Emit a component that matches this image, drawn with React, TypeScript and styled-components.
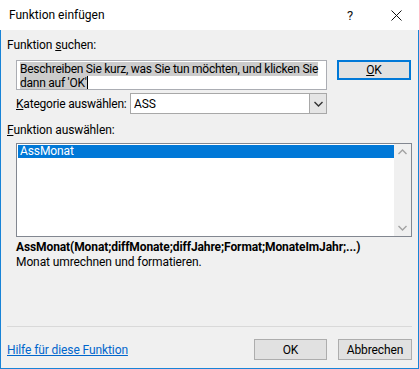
import React from "react";
import styled, { createGlobalStyle } from "styled-components";

const Global = createGlobalStyle`
  html, body { margin: 0; padding: 0; background: #ffffff; }
  body { font-family: Roboto, "Noto Sans", "DejaVu Sans", sans-serif; font-size: 12px; letter-spacing: -0.1px; color: #000; }
  * { box-sizing: border-box; }
`;

const Window = styled.div`
  width: 419px;
  height: 369px;
  display: flex;
  flex-direction: column;
  background: #f0f0f0;
`;

const TitleBar = styled.div`
  height: 30px;
  background: #ffffff;
  display: flex;
  align-items: center;
  padding-left: 9px;
`;

const Title = styled.div`
  flex: 1;
  font-size: 12px;
  letter-spacing: 0;
`;

const CaptionButton = styled.div`
  width: 46px;
  height: 30px;
  display: flex;
  align-items: center;
  justify-content: center;
  font-size: 13px;
  color: #111;
`;

const Body = styled.div`
  flex: 1;
  display: flex;
  flex-direction: column;
  border: 1px solid #1883d7;
  border-top: none;
  padding: 7px 6px 8px 6px;
`;

const Label = styled.div<{ $mt?: number }>`
  line-height: 16px;
  height: 16px;
  margin-top: ${(p) => p.$mt ?? 0}px;
  white-space: nowrap;
`;

const SearchRow = styled.div`
  display: flex;
  align-items: flex-start;
  gap: 10px;
  margin-top: 7px;
  padding-left: 9px;
`;

const SearchBox = styled.div`
  width: 311px;
  height: 30px;
  background: #ffffff;
  border: 1px solid #abadb3;
  padding: 1px 2px 0 3px;
  line-height: 14px;
  letter-spacing: -0.25px;
  white-space: nowrap;
  overflow: hidden;
`;

const Selected = styled.span`
  background: #cccccc;
`;

const Caret = styled.span`
  display: inline-block;
  width: 1px;
  height: 13px;
  background: #000;
  vertical-align: -2px;
`;

const Button = styled.div<{ $primary?: boolean; $w: number }>`
  width: ${(p) => p.$w}px;
  height: ${(p) => (p.$primary ? 20 : 21)}px;
  background: #e1e1e1;
  border: ${(p) => (p.$primary ? "2px solid #0078d7" : "1px solid #adadad")};
  display: flex;
  align-items: center;
  justify-content: center;
`;

const CategoryRow = styled.div`
  display: flex;
  align-items: center;
  margin-top: 3px;
  padding-left: 9px;
  height: 21px;
`;

const CategoryLabel = styled.div`
  width: 114px;
  white-space: nowrap;
  letter-spacing: -0.2px;
`;

const Select = styled.div`
  width: 197px;
  height: 21px;
  border: 1px solid #a8a8a8;
  background: #fff;
  display: flex;
  align-items: stretch;
`;

const SelectValue = styled.div`
  flex: 1;
  padding-left: 3px;
  display: flex;
  align-items: center;
`;

const DropButton = styled.div`
  width: 17px;
  background: #e5e5e5;
  border-left: 1px solid #a8a8a8;
  display: flex;
  align-items: center;
  justify-content: center;
`;

const ListBox = styled.div`
  margin-top: 5px;
  margin-left: 9px;
  width: 396px;
  height: 94px;
  border: 1px solid #828790;
  background: #fff;
  display: flex;
  padding: 1px 0 1px 1px;
`;

const ListItems = styled.div`
  flex: 1;
`;

const ListItem = styled.div<{ $selected?: boolean }>`
  height: 13px;
  line-height: 13px;
  padding-left: 2px;
  background: ${(p) => (p.$selected ? "#0078d7" : "transparent")};
  color: ${(p) => (p.$selected ? "#fff" : "#000")};
`;

const ScrollBar = styled.div`
  width: 17px;
  margin-top: -1px;
  margin-bottom: -1px;
  background: #f0f0f0;
  display: flex;
  flex-direction: column;
  justify-content: space-between;
  align-items: center;
  padding: 5px 0 5px;
`;

const Signature = styled.div`
  margin-top: 3px;
  margin-left: 9px;
  font-weight: bold;
  line-height: 15px;
  white-space: nowrap;
`;

const Description = styled.div`
  margin-left: 9px;
  line-height: 15px;
`;

const Separator = styled.div`
  margin-top: auto;
  height: 1px;
  background: #d9d9d9;
`;

const Footer = styled.div`
  display: flex;
  align-items: center;
  margin-top: 12px;
  gap: 11px;
`;

const HelpLink = styled.a`
  flex: 1;
  color: #0066cc;
  text-decoration: underline;
  cursor: pointer;
`;

const Chevron = ({ up, color }: { up?: boolean; color: string }) => (
  <svg width="9" height="6" viewBox="0 0 9 6">
    <path
      d={up ? "M0.5 5 L4.5 1 L8.5 5" : "M0.5 1 L4.5 5 L8.5 1"}
      fill="none"
      stroke={color}
      strokeWidth="1.4"
    />
  </svg>
);

export default function App() {
  return (
    <Window>
      <Global />
      <TitleBar>
        <Title>Funktion einfügen</Title>
        <CaptionButton>?</CaptionButton>
        <CaptionButton>
          <svg width="11" height="11" viewBox="0 0 11 11">
            <path d="M0.5 0.5 L10.5 10.5 M10.5 0.5 L0.5 10.5" stroke="#111" strokeWidth="1" />
          </svg>
        </CaptionButton>
      </TitleBar>
      <Body>
        <Label>
          Funktion <u>s</u>uchen:
        </Label>
        <SearchRow>
          <SearchBox>
            <Selected>Beschreiben Sie kurz, was Sie tun möchten, und klicken Sie</Selected>
            <br />
            <Selected>dann auf 'OK'</Selected>
            <Caret />
          </SearchBox>
          <Button $primary $w={74}>
            <span>
              <u>O</u>K
            </span>
          </Button>
        </SearchRow>
        <CategoryRow>
          <CategoryLabel>
            <u>K</u>ategorie auswählen:
          </CategoryLabel>
          <Select>
            <SelectValue>ASS</SelectValue>
            <DropButton>
              <Chevron color="#333" />
            </DropButton>
          </Select>
        </CategoryRow>
        <Label $mt={8}>
          <u>F</u>unktion auswählen:
        </Label>
        <ListBox>
          <ListItems>
            <ListItem $selected>AssMonat</ListItem>
          </ListItems>
          <ScrollBar>
            <Chevron up color="#a3a3a3" />
            <Chevron color="#a3a3a3" />
          </ScrollBar>
        </ListBox>
        <Signature>AssMonat(Monat;diffMonate;diffJahre;Format;MonateImJahr;...)</Signature>
        <Description>Monat umrechnen und formatieren.</Description>
        <Separator />
        <Footer>
          <HelpLink>Hilfe für diese Funktion</HelpLink>
          <Button $w={73}>OK</Button>
          <Button $w={74}>Abbrechen</Button>
        </Footer>
      </Body>
    </Window>
  );
}
